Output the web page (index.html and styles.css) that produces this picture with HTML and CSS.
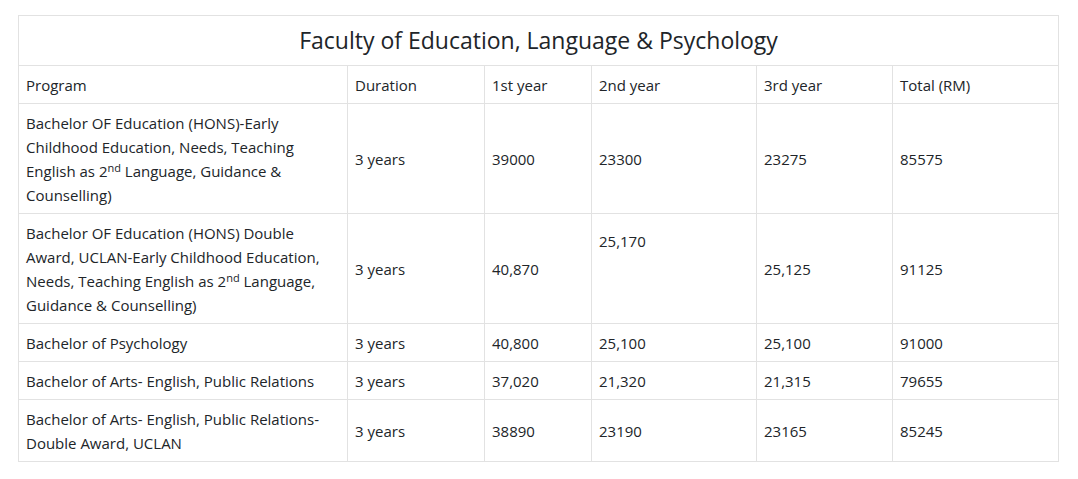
FILE: index.html
```html
<!DOCTYPE html>
<html lang="en">
<head>
<meta charset="utf-8">
<title>Faculty of Education, Language &amp; Psychology</title>
<link rel="stylesheet" href="styles.css">
</head>
<body>
<div class="page">
  <table class="fees">
    <colgroup>
      <col class="c-prog"><col class="c-dur"><col class="c-y1"><col class="c-y2"><col class="c-y3"><col class="c-tot">
    </colgroup>
    <thead>
      <tr><th class="title" colspan="6">Faculty of Education, Language &amp; Psychology</th></tr>
      <tr class="head">
        <td>Program</td><td>Duration</td><td>1st year</td><td>2nd year</td><td>3rd year</td><td>Total (RM)</td>
      </tr>
    </thead>
    <tbody>
      <tr>
        <td>Bachelor OF Education (HONS)-Early Childhood Education, Needs, Teaching English as 2<sup>nd</sup> Language, Guidance &amp; Counselling)</td>
        <td>3 years</td><td>39000</td><td>23300</td><td>23275</td><td>85575</td>
      </tr>
      <tr>
        <td>Bachelor OF Education (HONS) Double Award, UCLAN-Early Childhood Education, Needs, Teaching English as 2<sup>nd</sup> Language, Guidance &amp; Counselling)</td>
        <td>3 years</td><td>40,870</td><td class="top">25,170</td><td>25,125</td><td>91125</td>
      </tr>
      <tr>
        <td>Bachelor of Psychology</td>
        <td>3 years</td><td>40,800</td><td>25,100</td><td>25,100</td><td>91000</td>
      </tr>
      <tr>
        <td>Bachelor of Arts- English, Public Relations</td>
        <td>3 years</td><td>37,020</td><td>21,320</td><td>21,315</td><td>79655</td>
      </tr>
      <tr>
        <td>Bachelor of Arts- English, Public Relations- Double Award, UCLAN</td>
        <td>3 years</td><td>38890</td><td>23190</td><td>23165</td><td>85245</td>
      </tr>
    </tbody>
  </table>
</div>
</body>
</html>
```
FILE: styles.css
```css
html, body {
  margin: 0;
  padding: 0;
  background: #ffffff;
}
.page {
  padding: 15px 20px 0 18px;
  font-family: "Open Sans", "Noto Sans", sans-serif;
  color: #212529;
}
.fees {
  width: 1040px;
  border-collapse: collapse;
  table-layout: fixed;
  font-size: 15px;
  line-height: 24px;
}
.c-prog { width: 329px; }
.c-dur { width: 137px; }
.c-y1 { width: 107px; }
.c-y2 { width: 165px; }
.c-y3 { width: 136px; }
.c-tot { width: 166px; }
.fees th, .fees td {
  border: 1px solid #e2e2e2;
  padding: 7px 8px 6px 7px;
  vertical-align: middle;
  text-align: left;
  font-weight: 400;
}
.fees th.title {
  text-align: center;
  font-size: 23px;
  line-height: 36px;
  padding: 6px 8px 7px;
}
.fees td.top {
  vertical-align: top;
  padding-top: 15px;
}
sup {
  font-size: 11px;
  line-height: 0;
  vertical-align: 5px;
}
```
